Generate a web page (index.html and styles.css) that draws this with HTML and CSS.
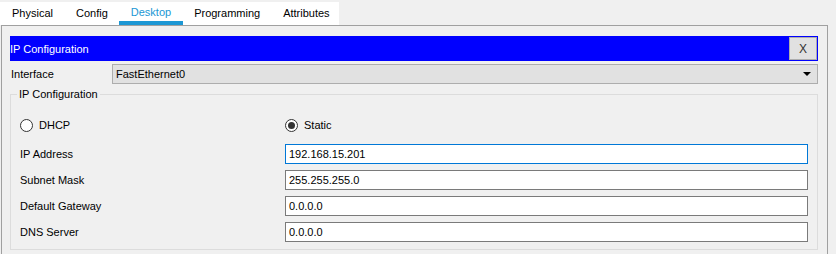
FILE: index.html
```html
<!DOCTYPE html>
<html lang="en">

<head>
    <meta charset="UTF-8">
    <title>IP Configuration</title>
    <link rel="stylesheet" href="styles.css">
</head>

<body>
    <div class="tabs">
        <span class="tab">Physical</span>
        <span class="tab">Config</span>
        <span class="tab active">Desktop</span>
        <span class="tab">Programming</span>
        <span class="tab">Attributes</span>
    </div>

    <div class="panel">
        <div class="titlebar">
            <span class="title">IP Configuration</span>
            <button class="close">X</button>
        </div>

        <div class="iface-row">
            <span class="iface-label">Interface</span>
            <div class="select">
                <span>FastEthernet0</span>
                <span class="arrow"></span>
            </div>
        </div>

        <fieldset class="ipconf">
            <legend>IP Configuration</legend>
            <div class="mode-row">
                <label class="radio-opt"><span class="radio"></span>DHCP</label>
                <label class="radio-opt"><span class="radio checked"></span>Static</label>
            </div>
            <div class="fields">
                <span class="field-label">IP Address</span>
                <div class="field focused">192.168.15.201</div>
                <span class="field-label">Subnet Mask</span>
                <div class="field">255.255.255.0</div>
                <span class="field-label">Default Gateway</span>
                <div class="field">0.0.0.0</div>
                <span class="field-label">DNS Server</span>
                <div class="field">0.0.0.0</div>
            </div>
        </fieldset>
    </div>
</body>

</html>
```

FILE: styles.css
```css
:root {
    --bg: #F0F0F0;
    --text: #000000;
    --accent: #1C97D4;
    --title: #0000FF;
    --control: #E1E1E1;
    --control-border: #ADADAD;
    --input-border: #7A7A7A;
    --focus: #0078D7;
    --group-border: #DCDCDC;
    --panel-border: #A0A0A0;
}

body {
    margin: 0;
    padding-top: 2px;
    background: var(--bg);
    color: var(--text);
    font-family: 'Liberation Sans', Arial, sans-serif;
    font-size: 11px;
    overflow: hidden;
}

.tabs {
    display: flex;
    width: 339px;
    height: 23px;
    background: #FFFFFF;
}

.tab {
    display: flex;
    align-items: center;
    padding: 0 11.5px 2px;
    box-sizing: border-box;
    height: 23px;
}

.tab:first-child {
    padding-left: 12px;
}

.tab.active {
    color: var(--accent);
    border-bottom: 4px solid var(--accent);
    padding-bottom: 0;
}

.panel {
    margin-left: 1px;
    width: 827px;
    height: 229px;
    box-sizing: border-box;
    border: 1px solid var(--panel-border);
    border-bottom: none;
    padding: 10px 9px 0 8px;
}

.titlebar {
    display: flex;
    align-items: center;
    justify-content: space-between;
    height: 25px;
    box-sizing: border-box;
    padding: 1px 1px 1px 0;
    background: var(--title);
}

.title {
    color: #FFFFFF;
    font-size: 11px;
}

.close {
    width: 28px;
    height: 23px;
    padding: 0;
    background: var(--control);
    border: 1px solid var(--control-border);
    font-family: inherit;
    font-size: 12px;
    color: #333333;
}

.iface-row {
    display: flex;
    align-items: center;
    margin-top: 3px;
    height: 20px;
}

.iface-label {
    width: 101px;
    padding-left: 1px;
}

.select {
    flex: 1;
    display: flex;
    align-items: center;
    justify-content: space-between;
    height: 20px;
    box-sizing: border-box;
    padding: 0 6px 0 3px;
    background: var(--control);
    border: 1px solid var(--control-border);
}

.arrow {
    width: 0;
    height: 0;
    border-left: 4px solid transparent;
    border-right: 4px solid transparent;
    border-top: 4px solid #000000;
}

.ipconf {
    margin: 4px 0 0;
    padding: 0 9px 7px;
    border: 1px solid var(--group-border);
}

.ipconf legend {
    margin-left: -3px;
    padding: 0 2px;
    line-height: 13px;
}

.mode-row {
    display: grid;
    grid-template-columns: 265px 1fr;
    align-items: center;
    height: 20px;
    margin-top: 14px;
}

.radio-opt {
    display: flex;
    align-items: center;
    gap: 6px;
}

.radio {
    display: grid;
    place-items: center;
    width: 13px;
    height: 13px;
    box-sizing: border-box;
    border: 1px solid #333333;
    border-radius: 50%;
    background: #FFFFFF;
}

.radio.checked::after {
    content: "";
    width: 7px;
    height: 7px;
    border-radius: 50%;
    background: #333333;
}

.fields {
    display: grid;
    grid-template-columns: 265px 1fr;
    align-items: center;
    row-gap: 6px;
    margin-top: 9px;
}

.field {
    display: flex;
    align-items: center;
    height: 20px;
    box-sizing: border-box;
    padding: 0 3px;
    background: #FFFFFF;
    border: 1px solid var(--input-border);
}

.field.focused {
    border-color: var(--focus);
}
```
